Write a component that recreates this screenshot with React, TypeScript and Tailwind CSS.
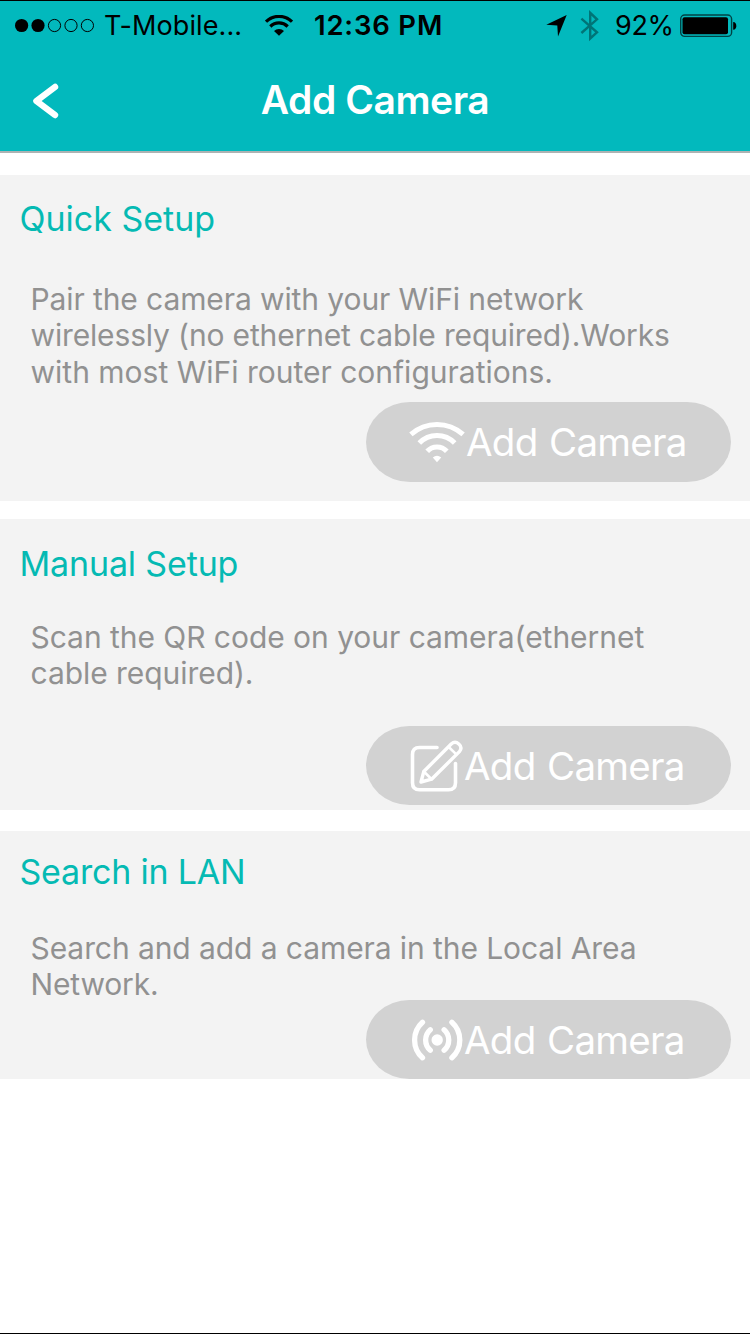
import type { ReactNode } from "react";

function StatusBar() {
  return (
    <div className="flex h-[50px] items-center text-[27px] leading-[50px] text-black">
      <svg className="ml-[14px] h-[16px] w-[82px] shrink-0" viewBox="0 0 82 16" fill="none">
        <circle cx="7.6" cy="7.5" r="6.6" fill="#000" />
        <circle cx="24" cy="7.5" r="6.6" fill="#000" />
        <circle cx="40.5" cy="7.5" r="6.1" stroke="#000" strokeWidth="1" />
        <circle cx="57" cy="7.5" r="6.1" stroke="#000" strokeWidth="1" />
        <circle cx="73.4" cy="7.5" r="6.1" stroke="#000" strokeWidth="1" />
      </svg>
      <span className="ml-[8px] w-[161px] shrink-0 tracking-[0.1px]">T-Mobile...</span>
      <svg className="h-[22px] w-[28px] shrink-0" viewBox="0 0 28 22" fill="none" stroke="#000" strokeWidth="3.2">
        <path d="M1 6.7a18.5 18.5 0 0 1 26 0" />
        <path d="M5.3 11.5a12.4 12.4 0 0 1 17.4 0" />
        <path d="M9 16.1a7 7 0 0 1 10 0L14 20.7z" fill="#000" stroke="none" />
      </svg>
      <span className="-mt-[2px] ml-[21px] w-[232px] shrink-0 text-[27.5px] font-semibold tracking-[0.8px]">12:36 PM</span>
      <svg className="h-[22px] w-[21px] shrink-0" viewBox="0 0 21 22">
        <path d="M20.7 0 12 21.5 11.3 10.5.3 9.7z" fill="#000" />
      </svg>
      <svg className="ml-[13px] h-[32px] w-[20px] shrink-0" viewBox="0 0 20 32" fill="none" stroke="#007477" strokeWidth="2.4">
        <path d="M1.4 8.6 17 22.3 10.2 28.5V2.8L17 9.3 1.4 23" />
      </svg>
      <span className="ml-[15px] w-[64px] shrink-0 tracking-[-0.3px]">92%</span>
      <svg className="h-[24px] w-[59px] shrink-0" viewBox="0 0 59 24" fill="none">
        <rect x="1.7" y="1" width="50.9" height="21.4" rx="4" stroke="#004345" strokeWidth="1.4" />
        <rect x="3.5" y="3.2" width="45.5" height="17" rx="2" fill="#000" />
        <path d="M54.2 8c4.2 0 4.2 7.8 0 7.8z" fill="#000" />
      </svg>
    </div>
  );
}

function WifiIcon() {
  return (
    <svg className="h-[42px] w-[56px]" viewBox="0 0 56 42" fill="none" stroke="#fff" strokeWidth="5">
      <path d="M1.9 13.4a39 39 0 0 1 52.2 0" />
      <path d="M10.3 22a24.5 24.5 0 0 1 35.4 0" />
      <path d="M18.2 30.2a13.3 13.3 0 0 1 19.6 0" />
      <path d="M23.8 36.4q4.2-3.4 8.4 0L28 41.2z" fill="#fff" stroke="none" />
    </svg>
  );
}

function EditIcon() {
  return (
    <svg className="h-[54px] w-[54px]" viewBox="0 0 54 54" fill="none" stroke="#fff" strokeWidth="3.6" strokeLinecap="round" strokeLinejoin="round">
      <path d="M27 8.5H9.5Q2.5 8.5 2.5 15.5V43.8Q2.5 50.8 9.5 50.8H38.5Q45.5 50.8 45.5 43.8V24.5" />
      <path d="M11 43 13.8 32.5 41.2 5Q45 1.4 48.8 5Q52.8 8.5 49.4 12.6L21.6 40.2z" strokeWidth="3.4" />
      <path d="M38.5 7.8 46.3 15.4M13.8 32.5 21.6 40.2" strokeWidth="2.6" />
    </svg>
  );
}

function SignalIcon() {
  return (
    <svg className="h-[42px] w-[52px]" viewBox="0 0 52 42" fill="none" stroke="#fff" strokeWidth="5.3" strokeLinecap="round">
      <circle cx="26.2" cy="21" r="5.7" fill="#fff" stroke="none" />
      <path d="M19.3 10.7a13.7 13.7 0 0 0 0 20.6M33.1 10.7a13.7 13.7 0 0 1 0 20.6" />
      <path d="M11.5 3.2a24 24 0 0 0 0 35.6M40.9 3.2a24 24 0 0 1 0 35.6" />
    </svg>
  );
}

function AddButton({ className, icon, label }: { className: string; icon: ReactNode; label: string }) {
  return (
    <button
      className={`mr-[19px] ml-auto flex w-[365px] shrink-0 items-center rounded-[44px/40px] bg-[#d2d2d2] text-[38.5px] leading-[40px] tracking-[-0.75px] [word-spacing:1.5px] whitespace-nowrap text-white ${className}`}
    >
      {icon}
      <span className={label}>Add Camera</span>
    </button>
  );
}

function Heading({ children, className }: { children: string; className: string }) {
  return <h2 className={`ml-[19.5px] shrink-0 text-[34px] leading-[40px] whitespace-nowrap text-[#05bab3] ${className}`}>{children}</h2>;
}

function Body({ children }: { children: ReactNode }) {
  return <div className="ml-[30.5px] text-[30px] leading-[36.4px] whitespace-nowrap text-[#919191]">{children}</div>;
}

export default function App() {
  return (
    <div className="flex h-[1334px] w-[750px] flex-col overflow-hidden border-y border-black bg-white font-['Inter','Liberation_Sans',sans-serif]">
      <header className="h-[152px] shrink-0 border-b-2 border-[#adb3b3] bg-[#02b9bd]">
        <StatusBar />
        <div className="grid h-[100px] grid-cols-[100px_1fr_100px] items-center">
          <svg className="ml-[32px] h-[36px] w-[28px]" viewBox="0 0 28 36" fill="none" stroke="#fff" strokeWidth="6.4" strokeLinecap="round" strokeLinejoin="round">
            <path d="M23 4 4.4 18 23 32" />
          </svg>
          <h1 className="-mt-[2px] text-center text-[39px] leading-[46px] font-semibold tracking-[-0.45px] whitespace-nowrap text-white">Add Camera</h1>
        </div>
      </header>

      <main className="flex flex-col pt-[22px]">
        <section className="flex h-[326px] flex-col bg-[#f3f3f3] pt-[24px]">
          <Heading className="tracking-[0px]">Quick Setup</Heading>
          <div className="h-[163px] shrink-0 pt-[42px]">
            <Body>
              <p className="tracking-[-0.1px]">Pair the camera with your WiFi network</p>
              <p className="tracking-[-0.15px]">wirelessly (no ethernet cable required).Works</p>
              <p className="tracking-[0px]">with most WiFi router configurations.</p>
            </Body>
          </div>
          <AddButton className="h-[80px] pl-[43px]" icon={<WifiIcon />} label="ml-[1px]" />
        </section>

        <section className="mt-[18px] flex h-[291px] flex-col bg-[#f3f3f3] pt-[25px]">
          <Heading className="tracking-[-0.15px]">Manual Setup</Heading>
          <div className="h-[142px] shrink-0 pt-[35px]">
            <Body>
              <p className="tracking-[-0.04px]">Scan the QR code on your camera(ethernet</p>
              <p className="tracking-[-0.05px]">cable required).</p>
            </Body>
          </div>
          <AddButton className="h-[79px] pl-[44px]" icon={<EditIcon />} label="ml-0" />
        </section>

        <section className="mt-[21px] flex h-[248px] flex-col bg-[#f3f3f3] pt-[21px]">
          <Heading className="tracking-[-0.2px]">Search in LAN</Heading>
          <div className="h-[108px] shrink-0 pt-[38px]">
            <Body>
              <p className="tracking-[-0.08px]">Search and add a camera in the Local Area</p>
              <p className="tracking-[-0.15px]">Network.</p>
            </Body>
          </div>
          <AddButton className="h-[79px] pl-[45px]" icon={<SignalIcon />} label="ml-[1px]" />
        </section>
      </main>
    </div>
  );
}
